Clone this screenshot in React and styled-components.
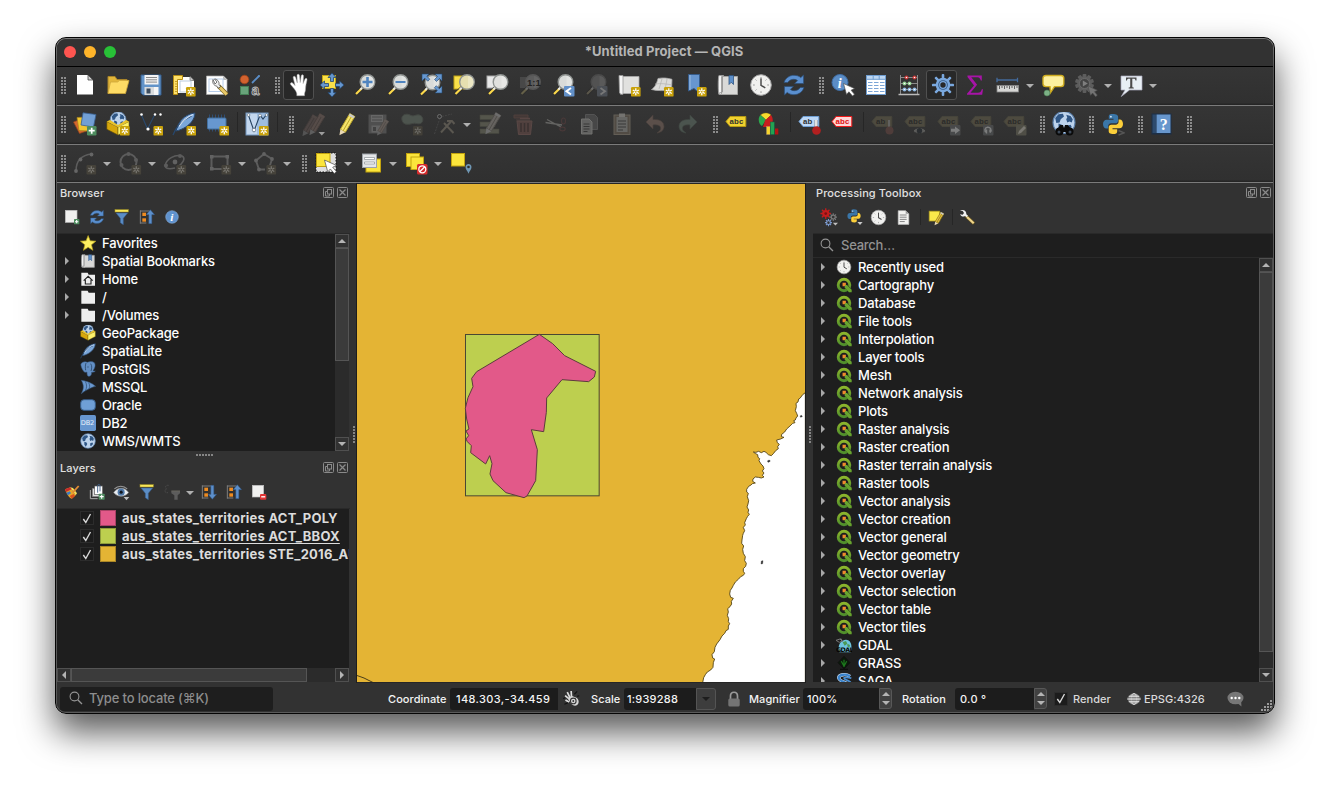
import React from "react";
import styled, { createGlobalStyle, css } from "styled-components";

const Global = createGlobalStyle`
  * { box-sizing: border-box; }
  body { margin: 0; background: #fff; overflow: hidden; }
  svg { display: block; flex: none; }
`;

const Page = styled.div`
  width: 1330px;
  height: 787px;
  padding: 37px 55px;
  font-family: Inter, "Liberation Sans", sans-serif;
  color: #f0f0f0;
`;
const Frame = styled.div`
  width: 1220px;
  height: 677px;
  padding: 1px;
  border: 1px solid #050505;
  border-radius: 11px;
  background: linear-gradient(#7c7c7c, #555 30px, #5a5a5a);
  box-shadow: 0 18px 35px rgba(0, 0, 0, 0.66);
`;
const Inner = styled.div`
  display: flex;
  flex-direction: column;
  height: 100%;
  border-radius: 9px;
  overflow: hidden;
  background: #323232;
`;

const TitleBar = styled.header`
  flex: none;
  height: 28px;
  display: grid;
  grid-template-columns: 1fr auto 1fr;
  align-items: center;
  padding: 0 9px 2px 7px;
  border-bottom: 1px solid #000;
  background: #323232;
  font-size: 13px;
  line-height: 16px;
  font-weight: 700;
  letter-spacing: 0.08px;
  color: #b5b5b5;
`;
const TitleText = styled.span`
  margin-bottom: 2px;
`;
const Lights = styled.div`
  display: flex;
  gap: 8px;
`;
const Light = styled.i`
  width: 12px;
  height: 12px;
  border-radius: 50%;
  background: ${(p) => p.$color};
`;

const Toolbar = styled.div`
  flex: none;
  display: flex;
  align-items: flex-start;
  height: ${(p) => p.$height || 39}px;
  padding-top: 6px;
  border-bottom: 1px solid #7b7b7b;
  background: linear-gradient(#353535, #303030 94%, #222);
`;
const Tool = styled.div`
  flex: none;
  width: 33px;
  height: 24px;
  padding: 0 4px 0 5px;
  ${(p) =>
    p.$checked &&
    css`
      height: 30px;
      margin-top: -3px;
      width: 31px;
      margin-left: 1px;
      margin-right: 1px;
      padding: 2px 3px 2px 4px;
      border: 1px solid #505050;
      border-radius: 3px;
      background: #282828;
    `}
  svg { opacity: ${(p) => (p.$off ? 0.85 : 1)}; }
`;
const Handle = styled.div`
  flex: none;
  width: ${(p) => (p.$first ? 11 : 16)}px;
  height: 24px;
  padding: 4px 2px 0 ${(p) => (p.$first ? 4 : 9)}px;
  &::before {
    content: "";
    display: block;
    width: 5px;
    height: 17px;
    background: radial-gradient(circle at 1px 1px, #8c8c8c 1.1px, transparent 1.2px) 0 0 / 3px 3px;
  }
`;
const Separator = styled.div`
  flex: none;
  width: ${(p) => p.$width || 7}px;
  height: ${(p) => p.$height || 20}px;
  background: linear-gradient(#262626, #262626) 4px 0 / 1px 100% no-repeat;
`;
const DropCell = styled.div`
  flex: none;
  width: 12px;
  height: ${(p) => p.$height || 24}px;
  display: grid;
  place-items: center;
  padding-top: 1px;
  &::before {
    content: "";
    border: 4px solid transparent;
    border-top-color: #b0b0b0;
    border-bottom: 0;
  }
`;

const Main = styled.div`
  flex: none;
  display: flex;
  height: 500px;
`;
const LeftDock = styled.section`
  width: 293px;
  display: flex;
  flex-direction: column;
`;
const RightDock = styled.section`
  width: 460px;
  display: flex;
  flex-direction: column;
`;
const DockTitle = styled.h2`
  flex: none;
  display: flex;
  align-items: center;
  justify-content: space-between;
  height: ${(p) => p.$height}px;
  margin: 0;
  padding: 0 1px 0 3px;
  font-size: 11px;
  font-weight: 500;
  letter-spacing: 0.12px;
  color: #e0e0e0;
`;
const MiniBar = styled.div`
  flex: none;
  display: flex;
  align-items: center;
  height: 32px;
  padding: 0 0 1px ${(p) => p.$left || 2}px;
  border-bottom: 1px solid #292929;
`;
const MiniTool = styled.div`
  flex: none;
  width: 25px;
  display: grid;
  place-items: center;
`;
const SplitV = styled.div`
  flex: none;
  width: ${(p) => p.$width}px;
  padding: 243px 0 0 3px;
  border-${(p) => p.$edge}: 1px solid #1d1d1d;
  &::before {
    content: "";
    display: block;
    width: 2px;
    height: 17px;
    background: repeating-linear-gradient(#858585 0 2px, transparent 2px 3px);
  }
`;
const SplitH = styled.div`
  flex: none;
  height: 8px;
  padding: 3px 0 0 2px;
  &::before {
    content: "";
    display: block;
    width: 17px;
    height: 2px;
    margin: 0 auto;
    background: repeating-linear-gradient(90deg, #858585 0 2px, transparent 2px 3px);
  }
`;
const TreeBox = styled.div`
  flex: none;
  display: flex;
  height: ${(p) => p.$height}px;
  margin-right: ${(p) => p.$edge || 0}px;
  background: #1e1e1e;
  overflow: hidden;
`;
const Tree = styled.ul`
  flex: 1;
  min-width: 0;
  margin: 0;
  padding: 0;
  list-style: none;
  overflow: hidden;
`;
const TreeRow = styled.li`
  display: flex;
  align-items: center;
  height: 18px;
  padding-left: 7px;
  font-size: 13px;
  font-weight: 500;
  letter-spacing: -0.17px;
  white-space: nowrap;
  color: #fff;
`;
const Branch = styled.i`
  flex: none;
  width: 16px;
  &::before {
    content: "";
    display: ${(p) => (p.$leaf ? "none" : "block")};
    width: 0;
    margin-left: 1px;
    border: 4px solid transparent;
    border-left-color: #a8a8a8;
    border-right: 0;
  }
`;
const RowLabel = styled.span`
  margin-left: 6px;
`;
const MiniIcon = styled.span`
  flex: none;
  width: 16px;
  height: 16px;
  display: grid;
  place-items: center;
`;
const Track = styled.div`
  flex: none;
  display: flex;
  flex-direction: ${(p) => (p.$row ? "row" : "column")};
  ${(p) => (p.$row ? "height: 14px; margin-right: 1px;" : "width: 14px;")}
  background: #2b2b2b;
`;
const ScrollButton = styled.div`
  flex: none;
  width: 14px;
  height: 14px;
  display: grid;
  place-items: center;
  border: 1px solid #505050;
  background: #323232;
  &::before {
    content: "";
    border: 4px solid transparent;
    ${(p) => p.$dir === "up" && "border-bottom-color:#b4b4b4;border-top:0;"}
    ${(p) => p.$dir === "down" && "border-top-color:#b4b4b4;border-bottom:0;"}
    ${(p) => p.$dir === "left" && "border-right-color:#b4b4b4;border-left:0;"}
    ${(p) => p.$dir === "right" && "border-left-color:#b4b4b4;border-right:0;"}
  }
`;
const Thumb = styled.div`
  flex: none;
  ${(p) => (p.$row ? "width" : "height")}: ${(p) => p.$size}px;
  border: 1px solid #555;
  background: #3b3b3b;
`;
const Filler = styled.div`
  flex: 1;
`;

const LayerRow = styled.li`
  display: flex;
  align-items: center;
  height: 18px;
  padding-left: 23px;
  font-size: 13px;
  font-weight: 700;
  letter-spacing: 0.24px;
  white-space: nowrap;
  color: #dcdcdc;
`;
const LayerName = styled.span`
  margin-left: 6px;
  line-height: 16px;
  text-decoration: ${(p) => (p.$current ? "underline" : "none")};
  text-underline-offset: 2px;
  text-decoration-skip-ink: none;
`;
const Swatch = styled.i`
  flex: none;
  width: 16px;
  height: 16px;
  margin-left: 6px;
  background: ${(p) => p.$color};
  border: 1px solid rgba(0, 0, 0, 0.25);
`;
const CheckBox = styled.span`
  flex: none;
  width: 14px;
  height: 14px;
  display: grid;
  place-items: center;
  border: 1px solid #2c2c2c;
  background: #1c1c1c;
`;

const SearchField = styled.div`
  flex: none;
  display: flex;
  align-items: center;
  gap: 7px;
  height: 24px;
  padding: 0 0 2px 7px;
  border-bottom: 1px solid #2a2a2a;
  background: #1e1e1e;
  font-size: 13px;
  font-weight: 500;
  letter-spacing: -0.25px;
  color: #929292;
`;

const StatusBar = styled.footer`
  flex: none;
  display: flex;
  align-items: center;
  height: 29px;
  padding: 2px 0 0 3px;
  background: #323232;
  font-size: 11px;
  font-weight: 500;
  letter-spacing: 0.06px;
  white-space: nowrap;
  color: #f4f4f4;
`;
const Locator = styled.div`
  width: 213px;
  height: 24px;
  display: flex;
  align-items: center;
  gap: 6px;
  padding: 0 0 1px 9px;
  border-radius: 3px;
  background: #1e1e1e;
  font-size: 13px;
  font-weight: 500;
  letter-spacing: -0.16px;
  color: #8d8d8d;
`;
const StatusLabel = styled.span`
  width: ${(p) => p.$width}px;
  margin-left: ${(p) => p.$gap}px;
  color: ${(p) => (p.$dim ? "#dadada" : "#f4f4f4")};
`;
const StatusInput = styled.div`
  flex: none;
  display: flex;
  align-items: center;
  width: ${(p) => p.$width}px;
  height: 22px;
  padding-left: ${(p) => p.$pad || 5}px;
  border-radius: 3px 0 0 3px;
  background: #1c1c1c;
  letter-spacing: ${(p) => p.$spacing || 0.1}px;
`;
const Spinner = styled.div`
  flex: none;
  width: 13px;
  height: 21px;
  display: flex;
  flex-direction: column;
  align-items: center;
  justify-content: center;
  gap: 5px;
  border: 1px solid #585858;
  border-radius: 0 3px 3px 0;
  background: #414141;
  &::before {
    content: "";
    border: 4px solid transparent;
    border-bottom-color: #b4b4b4;
    border-top: 0;
  }
  &::after {
    content: "";
    border: 4px solid transparent;
    border-top-color: #b4b4b4;
    border-bottom: 0;
  }
`;
const ComboButton = styled.div`
  flex: none;
  width: 20px;
  height: 22px;
  display: grid;
  place-items: center;
  border: 1px solid #545454;
  border-radius: 0 3px 3px 0;
  background: #3d3d3d;
  &::before {
    content: "";
    border: 4px solid transparent;
    border-top-color: #1d1d1d;
    border-bottom: 0;
  }
`;
const StatusIcon = styled.div`
  flex: none;
  width: ${(p) => p.$width}px;
  margin-left: ${(p) => p.$gap}px;
`;
const Grip = styled.div`
  margin: 14px 0 0 auto;
`;

/* ---------- shared icon pieces ---------- */
const S = ({ children, n = 24 }) => (
  <svg width={n} height={n} viewBox={`0 0 ${n} ${n}`} fill="none">{children}</svg>
);
const NewBadge = ({ x = 14, y = 14, off }) => (
  <g transform={`translate(${x} ${y})`}>
    <rect width="9.6" height="9.6" rx="1.2" fill={off ? "#45423a" : "#c9a20b"} />
    <path d="M4.8 1.3v7M1.800 3.050l6 3.500M7.800 3.050l-6 3.500" stroke={off ? "#77756f" : "#fff"} strokeWidth="1.300" />
    <circle cx="4.800" cy="4.800" r=".9" fill={off ? "#45423a" : "#c9a20b"} />
  </g>
);
const Lens = ({ fill = "#d9dbd9", rim = "#8f9391", stick = "#fcd94b", cx = 14.5, cy = 9, shine = 0.25 }) => (
  <>
    <path d={`M${cx - 5} ${cy + 5.5}L${cx - 11.5} ${cy + 12}`} stroke="#2a2a2a" strokeWidth="3.4" />
    <path d={`M${cx - 5.6} ${cy + 6.2}L${cx - 11.5} ${cy + 12}`} stroke={stick} strokeWidth="2.2" />
    <path d={`M${cx - 4.6} ${cy + 4.8}l-2.6 2.8`} stroke={shine > 0.1 ? "#e8e8e8" : "#6a6a6a"} strokeWidth="2" />
    <circle cx={cx} cy={cy} r="7.300" fill={fill} stroke={rim} strokeWidth="1.4" />
    <path d={`M${cx + 1} ${cy - 6}a6 6 0 0 1 0 12z`} fill="#fff" opacity={shine} />
  </>
);
const Tag = ({ fill, stroke, ink = "#303030", text = "abc", y = 4.5 }) => (
  <g>
    <path d={`M1 ${y + 5}L5 ${y}h15.800v10H5z`} fill={fill} stroke={stroke} strokeWidth="1" />
    <text x={text === "ab" ? 5 : 4.600} y={y + 7.800} fontSize="7.800" fontWeight="700" fontFamily="Liberation Sans" letterSpacing=".1" fill={ink}>{text}</text>
  </g>
);
const OffTag = ({ children, text }) => (
  <S>
    <Tag fill="#524f42" stroke="#4a483d" ink="#2a2a28" text={text} />
    {children}
  </S>
);
const Python = () => (
  <>
    <path d="M11.5 2C8 2 7.8 3.500 7.800 5v1.800h4.700v.9H5.600C3.500 7.700 2 9.300 2 12s1.300 4.500 3.300 4.500h1.900v-2.300c0-1.700 1.300-2.900 3-2.900h4.300c1.500 0 2.600-1.200 2.600-2.600V5c0-1.800-1.600-3-5.600-3z" fill="#3a76a8" />
    <path d="M12.500 22c3.500 0 3.700-1.500 3.700-3v-1.800h-4.700v-.9h6.900c2.100 0 3.600-1.600 3.600-4.300s-1.300-4.500-3.300-4.500h-1.100v2.300c0 1.700-1.300 2.900-3 2.900h-4.300c-1.500 0-2.600 1.200-2.600 2.600V19c0 1.800 1 3 4.800 3z" fill="#fccf3a" />
    <circle cx="9.900" cy="4.700" r=".9" fill="#dfe9f2" />
  </>
);
const Gear = ({ cx, cy, r, color, hole = "#2b2b2b", teeth = 8, w, inner = 0.36 }) => (
  <g transform={`translate(${cx} ${cy})`}>
    {Array.from({ length: teeth }, (_, i) => (
      <rect key={i} x={-(w || r * 0.17)} y={-r} width={(w || r * 0.17) * 2} height={r} rx={r * 0.08} fill={color} transform={`rotate(${(i * 360) / teeth})`} />
    ))}
    <circle r={r * 0.66} fill={color} />
    <circle r={r * inner} fill={hole} />
  </g>
);
const Refresh = () => (
  <g fill="#5a8fcf" stroke="#2b4d75" strokeWidth=".7">
    <path d="M2 9.500C3.500 5 7.500 2.300 12 2.300c2.700 0 5 .8 6.800 2.300L21.600 2v8.600h-9l3-3c-1-.8-2.300-1.300-3.800-1.300-2.400 0-4.700 1.100-6 3.200z" />
    <path d="M22 14.500c-1.500 4.500-5.500 7.200-10 7.200-2.700 0-5-.8-6.800-2.300L2.400 22v-8.600h9l-3 3c1 .8 2.300 1.300 3.800 1.300 2.400 0 4.700-1.100 6-3.200z" />
  </g>
);
const Clock = () => (
  <>
    <circle cx="12" cy="12" r="10.300" fill="#f1f1ef" stroke="#a9a9a9" strokeWidth="1" />
    <path d="M12 4v1.800M12 18.200V20M4 12h1.800M18.200 12H20M6.500 6.500l1 1M17.500 6.500l-1 1M6.500 17.500l1-1" stroke="#9a9a9a" strokeWidth="1" />
    <path d="M12 5.500V12.300l4.300 2.500" stroke="#4c4c4c" strokeWidth="1.500" />
  </>
);
const Globe = ({ r = 10 }) => (
  <g transform={`translate(12 12) scale(${r / 10})`}>
    <circle r="10" fill="#bdd3ec" stroke="#5c80ab" strokeWidth="1" />
    <path d="M-8-4l3-3.500 4-.5 1 2.500-3 2.500-1 3-3 .5zM2-7l4 1 2 3-1 3-2-1-2 1-1-3 1-1.500zM-5 1l3 1 1 2-2 4-2-3zM3 3l3-1 1 2-3 3-1-1z" fill="#2f5685" />
  </g>
);
const Box = ({ badge }) => (
  <>
    <path d="M.8 9.500L12 5l11 4.500L12 15z" fill="#6b5410" />
    <g transform="translate(-.5 -5) scale(1.05)"><Globe r={7.5} /></g>
    <path d="M.8 9.500L12 15v8L.8 17.200z" fill="#d7a70c" stroke="#5c4a08" strokeWidth=".6" />
    <path d="M23 9.500L12 15v8l11-5.800z" fill="#fdf16a" stroke="#7c6a10" strokeWidth=".6" />
    <path d="M.8 9.500L4 8l8 5 8-5 3 1.500L12 15z" fill="#e9c32b" />
    {badge && <NewBadge />}
  </>
);
const Feather = () => (
  <>
    <path d="M4 19C5.500 12.500 9 7 14.500 3.800 17.500 2 20.500 1.200 23 1c-.2 3-1 5.500-3 8.200-3 4.300-9 8.300-16 9.800z" fill="#7ba7da" stroke="#28476c" strokeWidth="1" />
    <path d="M1 23C4 15 10 8 19.500 4" stroke="#28476c" strokeWidth="1.300" />
    <path d="M7 14.500C10 9.500 15 5 21 2.500" stroke="#d5e4f5" strokeWidth="1.100" />
  </>
);
const Pencil = ({ a = "#f6e46b", b = "#b9a429", tip = "#e9d9b4", end = "#c9c9c9" }) => (
  <>
    <path d="M15.800 1.600l5 2.900-9.400 15.700-5-2.900z" fill={a} stroke={b} strokeWidth="1" />
    <path d="M18.300 3l-9.300 16" stroke={b} strokeWidth="1" />
    <path d="M6.400 17.300l5 2.900L5.400 23.200z" fill={tip} />
    <path d="M15.800 1.600l5 2.900-1.200 2-5-2.900z" fill={end} />
  </>
);
const Bookmark = () => (
  <>
    <path d="M3 2.500h4.500v19H3c-1-1-1-18 0-19z" fill="#f2f2f2" stroke="#9a9a9a" />
    <path d="M5.500 3.500h16v18h-16z" fill="#d9d9d7" stroke="#a4a4a2" />
    <path d="M2.500 20.500l4-1.500V3.500" stroke="#999" />
    <path d="M13 2.500h4.500v9L15.200 9.300 13 11.500z" fill="#5d8fc9" stroke="#2f5482" strokeWidth=".8" />
  </>
);
const Cursor = ({ x = 11, y = 11, fill = "#fff", k = 1 }) => (
  <path transform={`translate(${x} ${y}) scale(${k})`} d="M0 0l3 11 2.400-2.700 3.600 4.200 2-1.700-3.400-4.100L11 5z" fill={fill} stroke="#555" strokeWidth=".7" />
);
const Info = () => (
  <>
    <circle cx="9" cy="9.500" r="8" fill="#5b8dc6" stroke="#3f6ea6" />
    <text x="6.800" y="14.500" fontSize="14" fontStyle="italic" fontWeight="700" fontFamily="Liberation Serif" fill="#fff">i</text>
  </>
);

const ARROWS4 = "M12 0l4 4.500h-2.500v4h-3v-4H8zM12 24l4-4.500h-2.500v-4h-3v4H8zM0 12l4.500-4v2.500h4v3h-4V16zM24 12l-4.500-4v2.500h-4v3h4V16z";

const icons = {
  file: <S><path d="M4 2h11l5 5v14.500H4z" fill="#fff" /><path d="M15 2v5h5z" fill="#d0d0d0" stroke="#333" strokeWidth=".7" /></S>,
  open: <S><path d="M2 20.500V3.500h7l2 3h10v4z" fill="#e2b63a" stroke="#a8842a" /><path d="M2 20.500L4.500 9h7l2-1.500h9.500l-3.500 13z" fill="#fddb65" stroke="#cda63a" strokeWidth=".8" /></S>,
  save: <S><path d="M2 2h20v20H4l-2-2z" fill="#6394c9" stroke="#375f8d" /><rect x="5.500" y="2" width="14" height="9.500" fill="#f4f4f4" /><path d="M7 4.500h11M7 6.800h11M7 9.100h11" stroke="#8a8a8a" /><rect x="5.500" y="14" width="13" height="8" fill="#d9dcde" /><rect x="7.500" y="15.500" width="4" height="5" fill="#3d4d5f" /><rect x="15" y="14" width="4.500" height="8" fill="#f6f6f6" /></S>,
  layout: <S><path d="M5 4h13l4 3.500V20H5z" fill="#fff" /><path d="M18 3v4.500h4z" fill="#ccc" stroke="#555" strokeWidth=".6" /><path d="M1.500 2.500h9v4H5.500v15h-4z" fill="#ffe16a" stroke="#b88e13" /><path d="M3 8.500h2M3 11h2M3 13.500h2M3 16h2M3 18.500h2" stroke="#a97f0f" strokeWidth=".7" /><rect x="8" y="8" width="11" height="11" stroke="#bcd" /><NewBadge /></S>,
  manager: <S><path d="M1.500 3h17l3.500 3.500V21.500H1.500z" fill="#fff" stroke="#aaa" strokeWidth=".7" /><path d="M18 3v4h4z" fill="#bbb" /><rect x="4" y="6" width="14" height="12.500" stroke="#b7cdea" /><path d="M13.500 13l8.500 8.500" stroke="#7c6421" strokeWidth="4.400" /><path d="M15 14.500l6.700 7" stroke="#e8c868" strokeWidth="3" /><path d="M8 6.500c-1 3 .5 6 4 6.800l1.500 2 2-2L14 11.500c.5-3-2-5.600-4.500-5.500l2.500 3-2 2z" fill="#f0f0f0" stroke="#555" strokeWidth=".8" /></S>,
  style: <S><circle cx="6.500" cy="6.500" r="4.300" fill="#d2622f" stroke="#9d4218" strokeWidth=".8" /><path d="M14 10L21 3" stroke="#5b8dc6" strokeWidth="1.800" /><circle cx="21" cy="3" r="1.100" fill="#5b8dc6" /><rect x="2.500" y="13.500" width="8" height="8" fill="#68a37a" stroke="#457f55" /><text x="13.500" y="22" fontSize="14" fontWeight="700" fontFamily="Liberation Sans" fill="#3a3a3a" stroke="#b9b9b9" strokeWidth=".9">a</text></S>,
  pan: <S><path d="M6.200 15.800L2.600 11.600c-1-1.700 1.200-2.700 2.300-1.400l2.200 2.400L5.200 4.800c-.3-1.900 1.800-2.300 2.400-.5l1.700 5.600L9 2.600c0-1.800 2.300-1.900 2.500 0l.7 7 1-6.700c.3-1.700 2.400-1.400 2.300.3l-.4 7.400 1.900-4.500c.7-1.500 2.400-.8 2 .8-.7 3.300-1.400 6-1.500 9 0 2.500-1 3.500-1 5v1.800H8.800v-2C8.500 19 7.500 17.500 6.200 15.800z" fill="#fff" stroke="#aaa" strokeWidth=".5" /></S>,
  panSel: <S><rect x="2.500" y="2.500" width="13" height="13" fill="#f9e04a" stroke="#c0a214" /><path d={ARROWS4} fill="#6697d0" stroke="#24466d" strokeWidth=".8" /></S>,
  zoomIn: <S><Lens /><path d="M14.500 4v10M9.500 9h10" stroke="#4f84c0" strokeWidth="2.600" /></S>,
  zoomOut: <S><Lens /><path d="M9.500 9h10" stroke="#4f84c0" strokeWidth="2.200" /></S>,
  zoomFull: <S><Lens cx={13.5} cy={9.5} /><path d="M3 1h7L7.800 3.200l3 3-2 2-3-3L3 8zM23 1v7l-2.500-2.500-3 3-2-2 3-3L16 1zM23 20h-7l2.300-2.300-3-3 2-2 3 3L23 13z" fill="#6697d0" stroke="#24466d" strokeWidth=".6" /></S>,
  zoomSel: <S><rect x="2" y="3" width="12" height="13" fill="#f9e04a" stroke="#c0a214" /><Lens cx={15} fill="#e6dfb0" /></S>,
  zoomLayer: <S><rect x="2" y="3" width="12" height="12" fill="#e8e8e8" stroke="#aaa" /><Lens cx={15.5} fill="#e0e0de" /></S>,
  zoomNative: <S><rect x="2" y="4" width="11" height="11" fill="#484848" /><Lens cx={15} fill="#5c5c5c" rim="#555" stick="#656048" shine={0.05} /><text x="9" y="12.500" fontSize="9.500" fontWeight="700" fontFamily="Liberation Sans" fill="#222">1:1</text></S>,
  zoomLast: <S><Lens /><rect x="13" y="13" width="10.500" height="10.500" rx="1" fill="#6290c8" /><path d="M20 15l-4.500 3.200L20 21.500" stroke="#fff" strokeWidth="2" /></S>,
  zoomNext: <S><Lens fill="#525252" rim="#4a4a4a" stick="#5a564a" shine={0.05} /><rect x="13" y="13" width="10.500" height="10.500" rx="1" fill="#4b4f55" /><path d="M16.500 15l4.500 3.200-4.500 3.300" stroke="#777" strokeWidth="1.800" /></S>,
  newMap: <S><path d="M5 3.500h17v17H5z" fill="#e1e1df" stroke="#aaa" strokeWidth=".8" /><path d="M2 2.500h4v18.800H3.500l-1-2z" fill="#f5f5f5" stroke="#999" strokeWidth=".8" /><NewBadge /></S>,
  new3d: <S><path d="M8 5.500c5-1 9-.5 14 .8l-.5 11.500C15 17 8 18.500 1.500 16.500c3-2 5-5 6.500-11z" fill="#dcdcda" stroke="#aaa" strokeWidth=".8" /><path d="M5 11c6-1 12 0 17 1M12 6l-3 10M17 6l-2 11" stroke="#b3b3b0" strokeWidth=".7" /><NewBadge /></S>,
  newBm: <S><path d="M5.500 1.500h11V20L11 15.500 5.500 18z" fill="#6796cf" stroke="#365c8b" /><path d="M7 2v15" stroke="#9bbbe0" /><NewBadge /></S>,
  bookmarks: <S><Bookmark /></S>,
  clock: <S><Clock /></S>,
  refresh: <S><Refresh /></S>,
  identify: <S><Info /><Cursor x={12.5} y={10.5} /></S>,
  table: <S><rect x="2.500" y="2.500" width="19" height="19" fill="#fff" stroke="#6f9dd0" /><rect x="2.500" y="2.500" width="19" height="3.800" fill="#bcd6f2" stroke="#6f9dd0" /><path d="M4 9.500h4.500M4 12.500h4.500M4 15.500h4.500M4 18.500h4.500M10 9.500h4.500M10 12.500h4.500M10 15.500h4.500M10 18.500h4.500M16 9.500h4.500M16 12.500h4.500M16 15.500h4.500M16 18.500h4.500" stroke="#7ba5d6" strokeWidth="1" /><path d="M9.200 2.500v4M15.200 2.500v4" stroke="#6f9dd0" /></S>,
  abacus: <S><path d="M3.500 2v19M20.500 2v19M3.500 4.500h17M3.500 10.500h17M3.500 16.500h17" stroke="#8b8b8b" /><path d="M1.500 21.500h21" stroke="#bbb" strokeWidth="1.600" /><g fill="#c93434"><circle cx="9.500" cy="4.500" r="2" /><circle cx="17.500" cy="4.500" r="2" /></g><g fill="#8fce8f"><circle cx="7.500" cy="10.500" r="2" /><circle cx="12.500" cy="10.500" r="2" /></g><g fill="#8ab4de"><circle cx="7.500" cy="16.500" r="2" /><circle cx="12.500" cy="16.500" r="2" /><circle cx="17.500" cy="16.500" r="2" /></g><g fill="#fff"><circle cx="9.500" cy="4.500" r=".8" /><circle cx="17.500" cy="4.500" r=".8" /><circle cx="7.500" cy="10.500" r=".8" /><circle cx="12.500" cy="10.500" r=".8" /><circle cx="7.500" cy="16.500" r=".8" /><circle cx="12.500" cy="16.500" r=".8" /><circle cx="17.500" cy="16.500" r=".8" /></g></S>,
  gear: <S><Gear cx={12} cy={12} r={11} color="#7aa8de" hole="#35577f" w={1.3} inner={0.44} /><circle cx="12" cy="12" r="3.900" fill="#7aa8de" /><circle cx="12" cy="12" r="2.700" fill="#282828" /></S>,
  sigma: <S><path d="M4.500 2.500h14.300v5h-1c-.5-2-1.200-3.300-3.500-3.300H8.300l5.800 7.600-6.600 7.900h7.300c2.400 0 3.300-1 4-3.500h1.200l-.8 5.500H4v-1l7-8.300L4.500 4z" fill="#a714a7" /></S>,
  ruler: <S><path d="M1 7h20.500M1 4.800v4.400M21.500 4.800v4.400" stroke="#446b9c" strokeWidth="1.300" /><rect x="1" y="12.500" width="21.500" height="6.500" fill="#d6d6d4" stroke="#858585" strokeWidth=".8" /><path d="M3.500 13v3M6 13v2M8.500 13v3M11 13v2M13.500 13v3M16 13v2M18.500 13v3M21 13v2" stroke="#555" strokeWidth=".9" /></S>,
  mapTip: <S><path d="M5 2.500h15c2 0 2.800 1 2.800 2.800v5.500c0 2-1 2.800-2.800 2.800h-6.500l-4 6-.5-6H5c-2 0-3-1-3-2.800V5.300c0-2 1-2.800 3-2.800z" fill="#fdf0a0" stroke="#cfac20" strokeWidth="1.400" /><circle cx="6" cy="20" r="3" fill="#7cb186" stroke="#4f8258" strokeWidth=".6" /></S>,
  actionOff: <S><Gear cx={10.5} cy={10.5} r={9.5} color="#656565" hole="#656565" teeth={10} w={1.9} /><circle cx="10.500" cy="10.500" r="7.200" fill="#656565" /><circle cx="10.500" cy="10.500" r="5" fill="#464646" stroke="#808080" strokeWidth=".7" /><path d="M8.800 7.500v6l5-3z" fill="#8c8c8c" /><Cursor x={14} y={13} fill="#808080" k={0.85} /></S>,
  annot: <S><path d="M2 3h21v14H10.500l-8.200 6.500L6 17H2z" fill="#e8eff5" stroke="#aab" strokeWidth=".7" /><path d="M7 4.500h10.500v3h-1c-.3-1.500-.8-1.700-2-1.700h-1.200v7.500c0 1 .3 1.200 1.500 1.300v.9H9.700v-.9c1.200-.1 1.500-.3 1.500-1.300V5.800H10c-1.300 0-1.700.2-2 1.700H7z" fill="#4b4b4b" /></S>,

  dataSource: <S><path d="M.5 10l6 11.500 10-3.500-6-12z" fill="#d36830" stroke="#93451d" strokeWidth=".7" /><path d="M4 5.500l12-.5.500 14L6 18.500z" fill="#f2c630" stroke="#a9851a" strokeWidth=".7" /><path d="M10 .8l13 1.700-2.500 12.500-12.500-2z" fill="#729fd4" stroke="#385f90" strokeWidth=".8" /><rect x="14" y="14" width="9.500" height="9.500" rx="1.200" fill="#4e8c5f" /><path d="M18.700 15.700v6M15.700 18.700h6" stroke="#fff" strokeWidth="1.700" /></S>,
  geopackage: <S><Box badge /></S>,
  shape: <S><path d="M2.500 3L8.500 17 15.500 3" stroke="#294a70" strokeWidth="1.100" /><g fill="#fff"><circle cx="2.500" cy="2.500" r="1.300" /><circle cx="9" cy="17" r="1.600" /><circle cx="16" cy="2.500" r="1.200" /><circle cx="21.500" cy="2.500" r="1.200" /></g><NewBadge x={14.5} /></S>,
  spatialite: <S><Feather /><NewBadge x={14.5} /></S>,
  memory: <S><path d="M4.500 2.500v17M7.500 2.500v17M10.500 2.500v17M13.500 2.500v17M16.500 2.500v17M19.500 2.500v17" stroke="#304d70" strokeWidth="1" /><rect x="2.500" y="6" width="18.500" height="11" rx="1" fill="#6797cf" stroke="#43709f" /><NewBadge x={14.5} /></S>,
  virtual: <S><rect x="1" y="1" width="22" height="22" fill="#c3d7ee" stroke="#7093bb" /><path d="M12 1v22H23V1z" fill="#8fb2da" opacity=".7" /><path d="M3 2l6 17L15 3M15 3l3 4 4-5" stroke="#25415f" strokeWidth="1.100" /><g fill="#fff" stroke="#345" strokeWidth=".5"><circle cx="3.500" cy="3" r="1.400" /><circle cx="9" cy="18" r="1.800" /><circle cx="15" cy="3.500" r="1.400" /><circle cx="21.500" cy="3" r="1.300" /></g><NewBadge x={14} /></S>,
  pensOff: <S><g transform="translate(-4 1)"><Pencil a="#514846" b="#433c3a" tip="#5a5a5a" end="#544b48" /></g><g transform="translate(3 0)"><Pencil a="#5d514d" b="#4a413e" tip="#666" end="#5d514d" /></g><path d="M17.500 20h6.500L20.800 23.500z" fill="#b0b0b0" /></S>,
  pencil: <S><Pencil /></S>,
  saveOff: <S><rect x="1.500" y="2.500" width="18" height="19" fill="#555" /><rect x="4" y="3" width="12" height="7" fill="#707070" /><path d="M5 5h10M5 8h10" stroke="#4c4c4c" /><rect x="4.500" y="13.500" width="10" height="7" fill="#6c6c6c" /><rect x="6" y="15" width="3" height="4" fill="#444" /><g transform="translate(6 6) scale(.75)"><Pencil a="#6a625d" b="#534e4a" tip="#6a6a6a" end="#6a625d" /></g></S>,
  addOff: <S><path d="M2 5c2-4 7-3 9-1.500C14 5 16 2 19.500 3c4 1 4.500 7 1 8.500-3 1-5-1-8 0S5 13 3 10.500C2 9 1.500 7 2 5z" fill="#525a53" stroke="#474c47" /><NewBadge x={13} off /></S>,
  vertexOff: <S><path d="M1.500 22L7 6M9 4.500L19 2" stroke="#484848" strokeDasharray="2 1" /><circle cx="6.500" cy="4.500" r="2" stroke="#787878" /><path d="M8 20.500L18 9.500M11 11l9.500 10" stroke="#625e56" strokeWidth="2" /><path d="M14 9l5 0 2.500 3" stroke="#625e56" strokeWidth="2" /></S>,
  multiOff: <S><g fill="#5a5b50" stroke="#4a4b41" strokeWidth=".6"><rect x="2" y="3" width="19" height="4.500" /><rect x="2" y="10" width="15" height="4.500" /><rect x="2" y="17" width="19" height="4.500" /></g><g transform="translate(2 -1)"><Pencil a="#6f6c68" b="#55524e" tip="#777" end="#777" /></g></S>,
  deleteOff: <S><path d="M3 3h14v3H3zM5 8h14" stroke="#54423f" fill="#463a38" /><path d="M6 9h15l-1.500 13.500h-12z" fill="#564341" stroke="#604c49" /><path d="M10 11v9M13.500 11v9M17 11v9" stroke="#3c3231" strokeWidth="1.500" /><path d="M9 6.500h10" stroke="#5e4a47" strokeWidth="1.500" /></S>,
  cutOff: <S><path d="M1.500 10.500L18 13M3 7.500l14 7.500" stroke="#6d6d6b" strokeWidth="1.300" /><ellipse cx="19.500" cy="9" rx="2" ry="3" stroke="#4e3b3b" strokeWidth="1.100" /><ellipse cx="18.500" cy="17" rx="2.700" ry="1.900" stroke="#4e3b3b" strokeWidth="1.100" /></S>,
  copyOff: <S><path d="M8.500 2.500h9l3 3v12h-12z" fill="#4b4b4b" stroke="#595959" /><path d="M4.500 7h7.500l3 3v12H4.500z" fill="#6a6a69" stroke="#7c7c7a" /><path d="M6.500 12h6M6.500 14.500h6M6.500 17h6M6.500 19.500h4" stroke="#393939" /></S>,
  pasteOff: <S><rect x="4" y="3" width="16" height="19.500" fill="#575048" stroke="#6c665d" /><path d="M6.500 5h11v15h-11z" fill="#70706d" /><rect x="9" y="1.500" width="6" height="3.500" fill="#807f7b" /><path d="M8 9h8M8 12h8M8 15h8M8 18h5" stroke="#3b3b3b" /></S>,
  undoOff: <S><path d="M3 10l7-7v4.500c8-.5 11 3 11 7 0 3.500-3 6-7 6.500 3-2 4-3.500 3.500-5.500-.5-2-3-3-7.500-2.500V17z" fill="#62554f" stroke="#4e443f" strokeWidth=".7" /></S>,
  redoOff: <S><path d="M21 10l-7-7v4.500c-8-.5-11 3-11 7 0 3.500 3 6 7 6.500-3-2-4-3.500-3.500-5.500.5-2 3-3 7.500-2.500V17z" fill="#505a54" stroke="#424a45" strokeWidth=".7" /></S>,
  label: <S><Tag fill="#f0d22f" stroke="#b79a14" /></S>,
  diagram: <S><path d="M8 8L2.500 3C5 .5 10 .2 13 3z" fill="#f7dc2e" stroke="#8a7a10" strokeWidth=".4" /><path d="M8 8L2.500 3C-.5 6 .5 12 4 14z" fill="#2ba84c" /><path d="M7 8.500L13 3c3 4 2 10-2 12H5z" fill="#c91f1f" /><rect x="8.500" y="14.500" width="3.500" height="8" fill="#f8d52b" stroke="#b98" strokeWidth=".3" /><rect x="12.500" y="10" width="3.800" height="12.500" fill="#22a352" stroke="#164" strokeWidth=".5" /><rect x="17" y="16.500" width="3.300" height="6" fill="#b31313" /></S>,
  pinLabel: <S><Tag fill="#bcd8f8" stroke="#6f9fd4" text="ab" /><path d="M18 8v9" stroke="#8b8b8b" strokeWidth="3" /><path d="M18 8v8" stroke="#fff" strokeWidth="1.500" /><circle cx="18.500" cy="18.500" r="4.300" fill="#b32020" /></S>,
  redLabel: <S><Tag fill="#ffd6d6" stroke="#f01818" ink="#e01010" /></S>,
  l1: <OffTag text="ab"><path d="M18 8v8" stroke="#6a6a68" strokeWidth="2" /><circle cx="18.500" cy="18.500" r="4" fill="#553f3c" /></OffTag>,
  l2: <OffTag><path d="M9 19c3-4.500 10-4.500 13 0-3 3.500-10 3.500-13 0z" fill="#646462" stroke="#333" /><circle cx="15.500" cy="18.700" r="2.700" fill="#2a2e31" /></OffTag>,
  l3: <OffTag><rect x="13" y="13" width="10.500" height="10.500" rx="1" fill="#4c4e4f" /><path d="M14 16.800h4V14.500l5 3.800-5 3.800v-2.300h-4z" fill="#8a8b8b" /></OffTag>,
  l4: <OffTag><rect x="13" y="13" width="10.500" height="10.500" rx="1" fill="#4c4e4f" /><path d="M20 20.500c2.500-3 0-5.500-2.500-5.200-3 .5-3.500 3.700-1 5.200M16.500 17.500v4M20 17.500v3" stroke="#8a8b8b" strokeWidth="1.400" /></OffTag>,
  l5: <OffTag><rect x="13" y="13" width="10.500" height="10.500" rx="1" fill="#55544a" /><path d="M15 22l1-3 5-5 2 2-5 5z" fill="#85837c" /></OffTag>,
  metasearch: <S><g transform="translate(0 -1.500)"><Globe r={11} /></g><path d="M4 20l4-7h3l1 3 1-3h3l5 7" fill="#0b0b0b" /><circle cx="7.500" cy="19.500" r="4" fill="#0b0b0b" /><circle cx="17.500" cy="19.500" r="4" fill="#0b0b0b" /><circle cx="7" cy="20" r="1.500" fill="#3c4857" /><circle cx="18" cy="20" r="1.500" fill="#3c4857" /></S>,
  python: <S><Python /><path d="M17.500 18.500l5.500 2.300-5.500 2.300" stroke="#555" strokeWidth="1.500" /></S>,
  help: <S><rect x="1.500" y="1.500" width="20" height="21" fill="#1c2f47" /><rect x="2.500" y="2.500" width="3.500" height="18.500" fill="#2d4a6d" /><rect x="6.500" y="2.500" width="14" height="18.500" fill="#6796cc" /><text x="9.700" y="17.500" fontSize="16" fontWeight="700" fontFamily="Liberation Serif" fill="#fff">?</text></S>,

  curve: <S><path d="M3 20C3 10 8 4 19 3" stroke="#5c5c5c" strokeWidth="1.500" /><g fill="#666"><circle cx="3" cy="20" r="1.900" /><circle cx="7.500" cy="8.500" r="1.900" /><circle cx="18.500" cy="3.500" r="1.900" /></g><NewBadge x={13.5} off /></S>,
  circle: <S><circle cx="10.500" cy="11" r="8" stroke="#5c5c5c" strokeWidth="2" /><circle cx="10.500" cy="3" r="2" fill="#5c5c5c" /><circle cx="3.500" cy="14" r="2" fill="#5c5c5c" /><circle cx="18" cy="9" r="2" fill="#5c5c5c" /><NewBadge x={13.5} off /></S>,
  ellipse: <S><path d="M2 15C3 8 12 3 19 5c4 2 1 8-5 11" stroke="#5c5c5c" strokeWidth="1.600" /><path d="M2 15c1 3 6 3 10 2" stroke="#5c5c5c" strokeWidth="1.600" /><circle cx="12" cy="11" r="2.400" fill="#626262" /><circle cx="3" cy="14.500" r="2" fill="#5c5c5c" /><circle cx="17" cy="5" r="2" fill="#5c5c5c" /><NewBadge x={13.5} off /></S>,
  rect: <S><rect x="3.500" y="5.500" width="16" height="12.500" stroke="#5c5c5c" strokeWidth="2" /><g fill="#626262"><rect x="2" y="4" width="3.500" height="3.500" /><rect x="17.500" y="4" width="3.500" height="3.500" /><rect x="2" y="16" width="3.500" height="3.500" /></g><NewBadge x={13.5} off /></S>,
  polygon: <S><path d="M11 3l8 5-2.500 8M11 3L3 9.500l3 9h6" stroke="#5c5c5c" strokeWidth="1.900" /><g fill="#626262"><circle cx="11" cy="3" r="1.900" /><circle cx="19" cy="8" r="1.900" /><circle cx="3" cy="9.500" r="1.900" /><circle cx="6" cy="18.500" r="1.900" /></g><NewBadge x={13.5} off /></S>,
  select: <S><rect x="2" y="2" width="20" height="19" fill="#dedede" stroke="#111" strokeDasharray="1.500 1.500" /><rect x="2.500" y="2.500" width="13.500" height="13" fill="#fbe53c" stroke="#c2a30f" /><Cursor x={10.5} y={9} k={1.08} /></S>,
  selForm: <S><rect x="7" y="8" width="14.500" height="13" fill="#fbe53c" stroke="#c2a30f" /><rect x="3.500" y="3" width="14" height="13.500" fill="#e4e6e8" stroke="#9ca2a8" /><path d="M5.500 6.500h10v2h-10zM5.500 11h10v2h-10z" fill="#fff" stroke="#8d9297" strokeWidth=".7" /></S>,
  deselect: <S><rect x="2.500" y="2.500" width="13" height="13" fill="#fbe53c" stroke="#c2a30f" /><rect x="7" y="6" width="12.500" height="12.500" fill="#fbe53c" stroke="#c2a30f" /><rect x="13" y="13" width="10.500" height="10.500" rx="1.500" fill="#d92b2b" /><circle cx="18.300" cy="18.300" r="3.500" stroke="#fff" strokeWidth="1.300" /><path d="M15.800 20.800l5-5" stroke="#fff" strokeWidth="1.300" /></S>,
  selLoc: <S><rect x="2.500" y="2.500" width="13" height="12.500" fill="#fbe53c" stroke="#c2a30f" /><path d="M19.500 22.800c-1-2.800-3-4.300-3-6.700 0-4 6-4 6 0 0 2.400-2 3.900-3 6.700z" fill="#6f96b3" /><circle cx="19.500" cy="16" r="1.300" fill="#2d2d2d" /></S>,
};

const Scaled = ({ n = 16, children }) => (
  <svg width={n} height={n} viewBox="0 0 24 24" fill="none">{children}</svg>
);
const TreeArrow = ({ down }) => (
  <Scaled><path d="M2 2v20M2 3h14M2 21h9" stroke="#8a8a8a" strokeWidth="1.300" /><rect x="5" y="5.500" width="5.500" height="5" fill="#ef8c21" /><rect x="5" y="14" width="5.500" height="5" fill="#ef8c21" /><path transform={down ? "matrix(1 0 0 -1 0 24)" : undefined} d="M17 1l6.500 7.500H19.300V22h-4.600V8.500h-4z" fill="#5c8fcb" stroke="#2d5078" strokeWidth=".8" /></Scaled>
);
const mini = {
  add: <Scaled><rect x="2" y="2" width="17.500" height="18" fill="#f0f0ef" stroke="#bdbdbd" /><rect x="15" y="15" width="8" height="8" rx="1" fill="#4e8c5f" /><path d="M19 16.500v5M16.500 19h5" stroke="#fff" strokeWidth="1.600" /></Scaled>,
  refresh: <Scaled><Refresh /></Scaled>,
  funnel: <Scaled><rect x="1.500" y="1" width="20" height="3.500" fill="#f7e65a" stroke="#a59422" strokeWidth=".8" /><path d="M3 6h17.500l-6.500 8v9.500l-4.500-3V14z" fill="#5b8dc6" stroke="#345d8d" strokeWidth=".8" /></Scaled>,
  up: <TreeArrow />,
  down: <TreeArrow down />,
  info: <Scaled><circle cx="12" cy="12" r="9.500" fill="#5f92cd" stroke="#8fb2da" strokeWidth=".8" /><text x="9.500" y="18" fontSize="17" fontStyle="italic" fontWeight="700" fontFamily="Liberation Serif" fill="#fff">i</text></Scaled>,
  styling: <Scaled><path d="M1.500 8l8-3 8 12-6 5c-4-1-8-8-10-14z" fill="#e7a52a" /><path d="M1.500 8l8-3 2 3-8.500 4z" fill="#c92b2b" /><path d="M9.500 5l4 1 6 8-2 3z" fill="#f7e05a" /><path d="M3.500 13l5-2 2 3-4.500 3z" fill="#3b7bc4" /><path d="M13 13L22 3" stroke="#e08a34" strokeWidth="2.800" /><path d="M8.500 18l6-3 2 3-4.500 4z" fill="#d9501e" /></Scaled>,
  group: <Scaled><path d="M2 9v13h11" stroke="#aaa" strokeWidth="1.500" /><rect x="5" y="6.500" width="12" height="12.500" fill="#ddd" stroke="#777" /><rect x="8.500" y="3" width="12" height="13" fill="#fff" stroke="#555" /><path d="M13 13V2.500c0-2.500 3.500-2.500 3.500 0V11" stroke="#41628a" strokeWidth="1.400" /><rect x="14.500" y="14.500" width="9" height="9" rx="1" fill="#4e8c5f" /><path d="M19 16v6M16 19h6" stroke="#fff" strokeWidth="1.700" /></Scaled>,
  eye: <Scaled n={17}><path d="M1 12c5-8 16-8 21 0-5 7-16 7-21 0z" fill="#e9edf1" stroke="#888" /><circle cx="11.500" cy="11.500" r="5" fill="#5079a8" /><circle cx="11.500" cy="11.500" r="2.200" fill="#121820" /><path d="M2 7c5-5 13-5 18 0" stroke="#999" strokeWidth="1.500" /><path d="M15 18.500h8L19 23z" fill="#c0c0c0" /></Scaled>,
  exprOff: <Scaled><path d="M7 2C2 1 1 6 4 7.500c-4 1-3 7 2 5.500" stroke="#4a4a4a" strokeWidth="1.500" strokeDasharray="2.500 1" /><path d="M11 10h13v4l-3.500 3v6.500h-5V17L11 14z" fill="#5c5c5c" /><path d="M11 10.500h13" stroke="#6f6e62" /></Scaled>,
  remove: <Scaled><rect x="2" y="2" width="17" height="17.500" fill="#f0f0ef" stroke="#bdbdbd" /><rect x="13.500" y="15" width="9.500" height="8.500" rx="1.500" fill="#e03434" /><path d="M15.300 19.200h6" stroke="#fff" strokeWidth="2" /></Scaled>,
  gears: <Scaled n={19}><Gear cx={8.5} cy={7} r={6.8} color="#c41c1c" hole="#7c1010" w={0.9} inner={0.25} /><Gear cx={18} cy={11.5} r={4.8} color="#7a7a7a" hole="#333" w={0.7} /><Gear cx={12} cy={18.5} r={4.5} color="#7d9bd0" hole="#333" w={0.7} /><path d="M17.500 18.500h6.500L20.700 22z" fill="#c0c0c0" /></Scaled>,
  python: <Scaled n={18}><g transform="translate(1.500 0) scale(.88)"><Python /></g><path d="M16.500 18.500h7L20 22.500z" fill="#c9c9c9" /></Scaled>,
  clock: <Scaled n={17}><Clock /></Scaled>,
  doc: <Scaled n={15}><path d="M3.500 1h12l5 5v17h-17z" fill="#f3f3f1" stroke="#bbb" /><path d="M15.500 1v5h5z" fill="#999" /><path d="M6 8h11M6 11.500h11M6 15h11M6 18.500h8" stroke="#777" strokeWidth="1.400" /></Scaled>,
  edit: <Scaled n={17}><rect x="3" y="3" width="15" height="14" fill="#fbe94a" stroke="#a4901a" /><g transform="translate(6 3) scale(.86)"><Pencil a="#e8c540" b="#7e6713" /></g></Scaled>,
  wrench: <Scaled><path d="M10 10l12.500 12" stroke="#6a5820" strokeWidth="5" /><path d="M12 12l10 9.500" stroke="#efd58c" strokeWidth="3.200" /><path d="M1.500 2l4 1 2 3-2 2.500-4-.5c2 4 5 4 7.500 2.500l2.500 2 2-2.500-2.500-2C11.500 4 8 0 1.500 2z" fill="#f1f1f1" /></Scaled>,
};

const Q = () => (
  <Scaled>
    <defs><linearGradient id="qg" x1="0" y1="0" x2="0" y2="1"><stop offset="0" stopColor="#8cb52c" /><stop offset="1" stopColor="#4f8f2c" /></linearGradient></defs>
    <circle cx="12" cy="12" r="8.700" stroke="url(#qg)" strokeWidth="4.300" />
    <path d="M11 10.500l5.500.5 7 8.500v3.500h-4L11 14z" fill="#1e1e1e" />
    <path d="M13 12h3.500L23.500 19v4h-4L13 16z" fill="#68a42e" />
    <path d="M9.800 8.800h5v3l-2 2.200h-3z" fill="#ee8a2c" />
  </Scaled>
);
const Folder = ({ home }) => (
  <Scaled><path d="M2 2.500h9.500l1.500 3h9.500v16.500H2z" fill="#eeeeee" />{home && <path d="M5.500 14.500L12.300 8l6.700 6.500M8 13v6.500h8.500V13" stroke="#222" strokeWidth="1.700" />}</Scaled>
);
const nodeIcons = {
  star: <Scaled n={17}><path d="M11.500 .8l2.900 7.400 8 .5-6.200 5.100 2 7.900-6.700-4.300-6.700 4.300 2-7.900L.6 8.700l8-.5z" fill="#fdf062" stroke="#b49d1b" strokeWidth="1" /></Scaled>,
  bookmark: <Scaled><Bookmark /></Scaled>,
  home: <Folder home />,
  folder: <Folder />,
  gpkg: <Scaled><Box /></Scaled>,
  feather: <Scaled><Feather /></Scaled>,
  pg: <Scaled><path d="M4 2c3-1.500 5-1 7 0 4-1.500 8-1.500 10.500.5C24 6 22 11 19.500 14.500c1 1 2 .5 3.500.5-1.500 2-4 2-5.500 1.500-.3 3-.5 6-3.500 6.500-2.500.3-3.500-1-3.500-6.500-1.500.5-3.500.5-4 0C3 13 .5 6 1.500 4z" fill="#638fc4" stroke="#365b86" strokeWidth=".8" /><path d="M9 3c-1.500 4-1 8-.5 11M16 4c2 3 2 7 .5 11M11 9h2" stroke="#2c4a6d" strokeWidth="1.300" /></Scaled>,
  mssql: <Scaled><path d="M2 2c8 1 16 4 21.500 9C18 12 8 17 2 22c4-7 4-13 0-20z" fill="#6a98cf" stroke="#36587e" strokeWidth=".8" /><path d="M8 3.500c2.500 5 2.500 9.500 0 14.500M13 5.500c2 4 2 7 0 10" stroke="#2f4f74" strokeWidth="1.100" /></Scaled>,
  oracle: <Scaled><rect x="1" y="4" width="22" height="16" rx="5" fill="#6f9fd6" stroke="#365b86" strokeWidth="1.500" /></Scaled>,
  db2: <Scaled><rect width="24" height="24" rx="2.500" fill="#6796cf" /><text x="1" y="15.500" fontSize="10" fontFamily="DejaVu Sans" fill="#e8f0fa">DB2</text></Scaled>,
  globe: <Scaled><Globe r={11} /></Scaled>,
  clock: <Scaled><Clock /></Scaled>,
  q: <Q />,
  gdal: <Scaled><path d="M5 23C1 12 8 4 15 4c6 0 9 6 8 14l-1 5z" fill="#6ec3de" /><path d="M10 8l5-2 2 4-4 3zM17 10l4 2-1 4-3-2z" fill="#4c9a56" /><path d="M0 5l6-2 3 3-4 2zM7 2l3 5" stroke="#777" strokeWidth="1.500" /><text x="0" y="23" fontSize="9.500" fontWeight="700" fontFamily="DejaVu Sans" letterSpacing="-.9" fill="#050505">GDAL</text></Scaled>,
  grass: <Scaled><path d="M12 2l9 9.500-9 9.500-9-9.500z" fill="#0b1a0b" stroke="#111" strokeWidth="1.500" /><path d="M12 18V7M12 17L8 9.500M12 17l4-7.500" stroke="#1d7a1d" strokeWidth="1.800" /><path d="M6 21.500h12" stroke="#0a0a0a" strokeWidth="1.500" /></Scaled>,
  saga: <Scaled><path d="M21 5C15 1 5 2 4 7c-.5 4 7 6 13 9" stroke="#d8e6f5" strokeWidth="5" /><path d="M21 5C15 1 5 2 4 7c-.5 4 7 6 13 9" stroke="#3b84cc" strokeWidth="3.600" /><path d="M23 8c-5-2-11-2-11 0s7 3 10 6M1 17c5 3 11 3 14 1" stroke="#4a8fd2" strokeWidth="2.500" /></Scaled>,
};

const Magnify = () => (
  <svg width="14" height="14" viewBox="0 0 14 14" fill="none"><circle cx="5.500" cy="5.500" r="4.400" stroke="#949494" strokeWidth="1.100" /><path d="M8.700 8.700l4.300 4.300" stroke="#949494" strokeWidth="1.300" /></svg>
);
const Check = () => (
  <svg width="10" height="11" viewBox="0 0 10 11" fill="none"><path d="M1.300 6l2.500 3.500L8.500 1" stroke="#d8d8d8" strokeWidth="1.400" /></svg>
);
const DockButtons = () => (
  <svg width="26" height="12" viewBox="0 0 26 12" fill="none" stroke="#8a8a8a">
    <rect x=".5" y=".5" width="10" height="10" rx="1" /><rect x="4.500" y="2.500" width="4" height="4.500" /><path d="M4.500 4.500h-2v4.500h4v-2" />
    <rect x="14.500" y=".5" width="10" height="10" rx="1" /><path d="M16.500 2.500l6 6M22.500 2.500l-6 6" strokeWidth="1.300" />
  </svg>
);

/* ---------- toolbar contents: "|" handle, "/" separator, "v" drop arrow ---------- */
const rows = [
  "| file open save layout manager style | +pan panSel zoomIn zoomOut zoomFull zoomSel zoomLayer zoomNative zoomLast zoomNext newMap new3d newBm bookmarks clock refresh | identify table abacus +gear sigma ruler v mapTip actionOff v annot v",
  "| dataSource geopackage shape spatialite memory / virtual / | pensOff pencil saveOff addOff vertexOff v multiOff deleteOff cutOff copyOff pasteOff undoOff redoOff | label diagram / pinLabel redLabel / l1 l2 l3 l4 l5 | metasearch | python | help |",
  "| curve v circle v ellipse v rect v polygon v | select v selForm v deselect v selLoc",
];
const renderTool = (t, i) => {
  if (t === "|") return <Handle key={i} $first={i === 0} />;
  if (t === "/") return <Separator key={i} />;
  if (t === "v") return <DropCell key={i} />;
  const name = t.replace("+", "");
  return <Tool key={i} $checked={t[0] === "+"} $off={/Off$|^l\d$/.test(name)}>{icons[name]}</Tool>;
};

const browser = [
  ["star", "Favorites", 1], ["bookmark", "Spatial Bookmarks"], ["home", "Home"], ["folder", "/"], ["folder", "/Volumes"],
  ["gpkg", "GeoPackage", 1], ["feather", "SpatiaLite", 1], ["pg", "PostGIS", 1], ["mssql", "MSSQL", 1], ["oracle", "Oracle", 1],
  ["db2", "DB2", 1], ["globe", "WMS/WMTS", 1],
];
const toolbox = [
  ["clock", "Recently used"],
  ...["Cartography", "Database", "File tools", "Interpolation", "Layer tools", "Mesh", "Network analysis", "Plots", "Raster analysis", "Raster creation", "Raster terrain analysis", "Raster tools", "Vector analysis", "Vector creation", "Vector general", "Vector geometry", "Vector overlay", "Vector selection", "Vector table", "Vector tiles"].map((n) => ["q", n]),
  ["gdal", "GDAL"], ["grass", "GRASS"], ["saga", "SAGA"],
];
const layers = [
  ["#e25989", "aus_states_territories ACT_POLY"],
  ["#bdcf4f", "aus_states_territories ACT_BBOX", true],
  ["#e4b434", "aus_states_territories STE_2016_AUST"],
];

const MapCanvas = () => (
  <svg width="448" height="500" viewBox="357 183 448 500">
    <rect x="357" y="183" width="448" height="500" fill="#1f1f1f" />
    <rect x="357" y="184" width="448" height="498" fill="#e4b434" />
    <g transform="translate(690 380) scale(.33333)">
      <path d="M346 38L338 44 330 55 326 57 324 66 318 70 319 80 316 92 320 100 323 108 318 114 316 120 311 122 315 128 308 130 300 138 290 147 284 156 275 163 274 170 282 172 272 177 260 180 262 188 268 193 263 200 265 206 257 212 250 221 244 227 235 224 228 217 222 214 214 218 206 214 198 217 190 216 197 221 203 224 204 232 209 236 207 242 213 252 219 258 222 266 217 273 222 279 217 286 222 291 214 294 205 292 196 291 189 297 188 304 196 309 187 311 183 315 176 319 170 328 170 336 175 340 172 350 176 362 174 372 171 381 176 390 174 397 178 403 173 409 169 416 164 428 166 435 160 442 164 452 160 460 158 466 156 480 155 490 161 498 158 508 160 520 166 530 164 542 169 550 167 559 160 566 160 574 164 580 160 586 152 590 145 598 136 606 130 616 126 624 121 631 119 642 122 652 130 655 124 664 125 672 120 680 113 686 115 696 112 706 116 716 115 725 119 731 115 738 115 748 108 752 104 760 96 768 90 779 80 792 75 802 73 815 66 824 68 834 74 837 70 848 69 862 62 870 52 876 46 884 41 893 38 908L346 908z" fill="#fff" stroke="#4f4014" strokeWidth="2.600" />
      <path d="M233 242l5-2 3 3-4 4-4-1zM330 108l5-2 2 4-5 2zM214 543l5-1-1 9-5 1z" fill="#333" stroke="#333" />
    </g>
    <path d="M357 675.500l7 2.500 9 4.500" stroke="#4a3d18" fill="none" />
    <g transform="translate(450 325) scale(.33333)" stroke="#4a4733" strokeWidth="3">
      <rect x="46.500" y="28.500" width="401" height="484" fill="#bdcf4f" />
      <path d="M268 28L308 56 344 92 437 139 433 156 416 170 336 164 290 219 289 262 281 320 244 314 262 374 257 467 231 513 222 518 168 503 129 467 120 447 126 416 119 392 107 417 62 383 64 362 52 350 48 342 56 332 48 318 57 312 50 282 46 250 54 218 69 185 65 160 80 140z" fill="#e25989" stroke="#5b3c3c" />
    </g>
    <path d="M357 183.500h448" stroke="#262626" />
    <path d="M357 682.500h448" stroke="#262626" />
  </svg>
);

const MiniRow = ({ items }) =>
  items.split(" ").map((t, i) =>
    t === "v" ? <DropCell key={i} $height={16} /> : t === "/" ? <Separator key={i} $height={16} $width={6.5} /> : <MiniTool key={i}>{mini[t]}</MiniTool>
  );
const Nodes = ({ items }) => (
  <Tree>
    {items.map(([ic, name, leaf]) => (
      <TreeRow key={name}><Branch $leaf={leaf} /><MiniIcon>{nodeIcons[ic]}</MiniIcon><RowLabel>{name}</RowLabel></TreeRow>
    ))}
  </Tree>
);

export default function App() {
  return (
    <Page>
      <Global />
      <Frame>
        <Inner>
          <TitleBar>
            <Lights><Light $color="#fe5550" /><Light $color="#feb42a" /><Light $color="#28c137" /></Lights>
            <TitleText>*Untitled Project — QGIS</TitleText>
          </TitleBar>
          {rows.map((r, i) => (
            <Toolbar key={i} $height={i === 2 ? 38 : 39}>{r.split(" ").map(renderTool)}</Toolbar>
          ))}
          <Main>
            <LeftDock>
              <DockTitle $height={19}>Browser<DockButtons /></DockTitle>
              <MiniBar><MiniRow items="add refresh funnel up info" /></MiniBar>
              <TreeBox $height={217} $edge={1}>
                <Nodes items={browser} />
                <Track>
                  <ScrollButton $dir="up" /><Thumb $size={113} /><Filler /><ScrollButton $dir="down" />
                </Track>
              </TreeBox>
              <SplitH />
              <DockTitle $height={18}>Layers<DockButtons /></DockTitle>
              <MiniBar><MiniRow items="styling group eye funnel exprOff v down up remove" /></MiniBar>
              <TreeBox $height={159} $edge={1}>
                <Tree>
                  {layers.map(([c, name, cur]) => (
                    <LayerRow key={name}><CheckBox><Check /></CheckBox><Swatch $color={c} /><LayerName $current={cur}>{name}</LayerName></LayerRow>
                  ))}
                </Tree>
              </TreeBox>
              <Track $row><ScrollButton $dir="left" /><Thumb $row $size={236} /><Filler /><ScrollButton $dir="right" /></Track>
            </LeftDock>
            <SplitV $edge="right" $width={7} />
            <MapCanvas />
            <SplitV $edge="left" $width={8} />
            <RightDock>
              <DockTitle $height={19}>Processing Toolbox<DockButtons /></DockTitle>
              <MiniBar $left={3}><MiniRow items="gears python clock doc / edit / wrench" /></MiniBar>
              <SearchField><Magnify />Search…</SearchField>
              <TreeBox $height={424}>
                <Nodes items={toolbox} />
                <Track><ScrollButton $dir="up" /><Thumb $size={380} /><Filler /><ScrollButton $dir="down" /></Track>
              </TreeBox>
            </RightDock>
          </Main>
          <StatusBar>
            <Locator><Magnify />Type to locate (⌘K)</Locator>
            <StatusLabel $gap={115} $width={62}>Coordinate</StatusLabel>
            <StatusInput $width={108} $pad={6} $spacing={0.38}>148.303,-34.459</StatusInput>
            <StatusIcon $gap={5} $width={17}>
              <Scaled n={17}><path d="M6 3l4 8M11.500 1.500l.5 8M3 8l6 5M3.500 14l5 3" stroke="#ddd" strokeWidth="2.400" /><path d="M7 12l5-4 7 3c4 3 4 8 1 10-4 3-9 0-13-9z" fill="#d6d6d6" /><circle cx="14.500" cy="15.500" r="4" stroke="#333" strokeWidth="1.500" /><circle cx="14.500" cy="15.500" r="1.300" fill="#333" /><path d="M0 12l3-1M20 2l-4 4M2 20l5-2M23 8l-3 1" stroke="#111" strokeWidth="1.500" /></Scaled>
            </StatusIcon>
            <StatusLabel $gap={11} $width={33}>Scale</StatusLabel>
            <StatusInput $width={72} $pad={3} $spacing={0.22}>1:939288</StatusInput>
            <ComboButton />
            <StatusIcon $gap={11} $width={14}>
              <svg width="14" height="16" viewBox="0 0 14 16" fill="none"><path d="M3.500 8V5c0-5 7-5 7 0v3" stroke="#999" strokeWidth="1.700" /><rect x="1.300" y="7.500" width="11.400" height="8" rx="1.500" fill="#747474" /></svg>
            </StatusIcon>
            <StatusLabel $gap={8} $width={54}>Magnifier</StatusLabel>
            <StatusInput $width={76} $pad={4} $spacing={0.14}>100%</StatusInput><Spinner />
            <StatusLabel $gap={10} $width={53}>Rotation</StatusLabel>
            <StatusInput $width={79} $pad={5} $spacing={0.3}>0.0 °</StatusInput><Spinner />
            <StatusIcon $gap={7} $width={14}><CheckBox><Check /></CheckBox></StatusIcon>
            <StatusLabel $gap={5} $width={53} $dim>Render</StatusLabel>
            <StatusIcon $gap={1} $width={15}>
              <svg width="14" height="14" viewBox="0 0 14 14" fill="none"><circle cx="7" cy="7" r="5.800" fill="#a2a2a2" /><ellipse cx="7" cy="7" rx="2.700" ry="5.700" stroke="#d6d6d6" strokeWidth=".8" /><path d="M0 7h14M1.700 4.300h10.600M1.700 9.700h10.600" stroke="#dedede" /><path d="M0 5.700h14M1 8.400h12" stroke="#6a6a6a" strokeWidth=".6" /></svg>
            </StatusIcon>
            <StatusLabel $gap={2} $width={60} $dim>EPSG:4326</StatusLabel>
            <StatusIcon $gap={23} $width={18}>
              <svg width="17" height="16" viewBox="0 0 17 16"><ellipse cx="8.500" cy="7" rx="8" ry="6.300" fill="#777" /><path d="M9 11l5.500 4.500-.5-6z" fill="#777" /><circle cx="4.700" cy="7" r="1.200" fill="#fff" /><circle cx="8.500" cy="7" r="1.200" fill="#fff" /><circle cx="12.300" cy="7" r="1.200" fill="#fff" /></svg>
            </StatusIcon>
            <Grip>
              <svg width="14" height="12" viewBox="0 0 14 12" fill="#9a9a9a">
                {[[11, 0], [8, 3], [11, 3], [5, 6], [8, 6], [11, 6], [2, 9], [5, 9], [8, 9]].map(([x, y]) => <rect key={`${x}-${y}`} x={x} y={y} width="2" height="2" />)}
              </svg>
            </Grip>
          </StatusBar>
        </Inner>
      </Frame>
    </Page>
  );
}
